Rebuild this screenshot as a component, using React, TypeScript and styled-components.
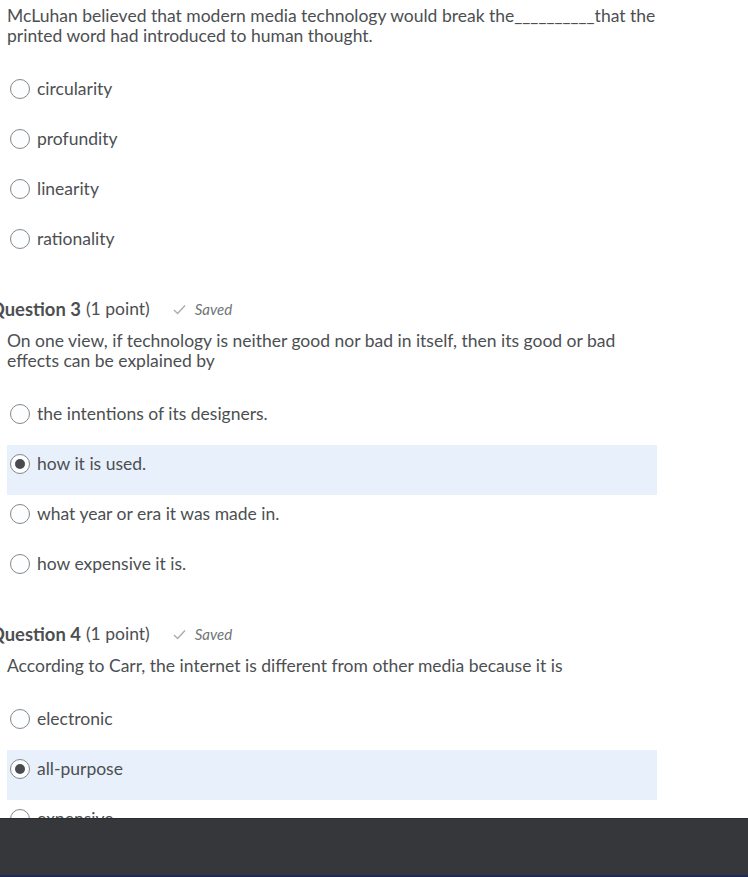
import React from 'react';
import styled, {createGlobalStyle} from 'styled-components';

const Global=createGlobalStyle`
  html,body{margin:0;padding:0;background:#fff;}
  body{font-family:Lato,"Noto Sans",sans-serif;color:#4c4f52;}
`

const Page=styled.div`
  height:100vh;
  display:flex;
  flex-direction:column;
  overflow:hidden;
`

const Scroll=styled.div`
  flex:1;
  overflow:hidden;
  padding:6px 0 0 7px;
`

const Prompt=styled.p`
  margin:0;
  width:650px;
  font-size:17.5px;
  line-height:20px;
`

const Options=styled.ul`
  list-style:none;
  margin:24px 0 0;
  padding:0;
  width:650px;
`

const Option=styled.li<{$selected?:boolean}>`
  height:50px;
  box-sizing:border-box;
  padding:9px 0 0 3px;
  display:flex;
  align-items:flex-start;
  gap:7px;
  font-size:17.5px;
  line-height:20px;
  background:${p=>p.$selected?'#e8f1fb':'transparent'};
`

const Radio=styled.span<{$checked?:boolean}>`
  width:20px;
  height:20px;
  box-sizing:border-box;
  border:1px solid #868788;
  border-radius:50%;
  background:#fcfdff;
  display:flex;
  align-items:center;
  justify-content:center;
  flex:none;
  &::after{
    content:'';
    width:10px;
    height:10px;
    border-radius:50%;
    background:${p=>p.$checked?'#494c4e':'transparent'};
  }
`

const Header=styled.h2`
  margin:27px 0 10px -17px;
  font-size:17.5px;
  line-height:24px;
  font-weight:400;
  display:flex;
  align-items:center;
  white-space:nowrap;
  > strong{font-weight:700;font-size:18.4px;margin-right:5px;}
`

const Saved=styled.span`
  display:inline-flex;
  align-items:center;
  gap:9px;
  margin-left:23px;
  font-size:15px;
  font-style:italic;
  color:#6e7376;
`

const Footer=styled.footer`
  height:59px;
  flex:none;
  background:#36373b;
  border-top:1px solid #2a2b2e;
  border-bottom:2px solid #1e2a5c;
  box-sizing:border-box;
`

function Check(){
  return (
    <svg width="13" height="11" viewBox="0 0 13 11">
      <path d="M1 6 L4.6 9.4 L12 1.6" fill="none" stroke="#a9acae" strokeWidth="1.4"/>
    </svg>
  )
}

type Q={num?:number;text:string;options:string[];selected?:number}

const questions:Q[]=[
  {text:'McLuhan believed that modern media technology would break the__________that the printed word had introduced to human thought.',
   options:['circularity','profundity','linearity','rationality']},
  {num:3,text:'On one view, if technology is neither good nor bad in itself, then its good or bad effects can be explained by',
   options:['the intentions of its designers.','how it is used.','what year or era it was made in.','how expensive it is.'],selected:1},
  {num:4,text:'According to Carr, the internet is different from other media because it is',
   options:['electronic','all-purpose','expensive','personal'],selected:1},
]

export default function App(){
  return (
    <Page>
      <Global/>
      <Scroll>
        {questions.map((q,i)=>
          <section key={i}>
            {q.num &&
              <Header>
                <strong>Question {q.num}</strong>(1 point)
                <Saved><Check/>Saved</Saved>
              </Header>}
            <Prompt>{q.text}</Prompt>
            <Options>
              {q.options.map((o,j)=>
                <Option key={o} $selected={q.selected===j}>
                  <Radio $checked={q.selected===j}/>
                  <span>{o}</span>
                </Option>
              )}
            </Options>
          </section>
        )}
      </Scroll>
      <Footer/>
    </Page>
  )
}
